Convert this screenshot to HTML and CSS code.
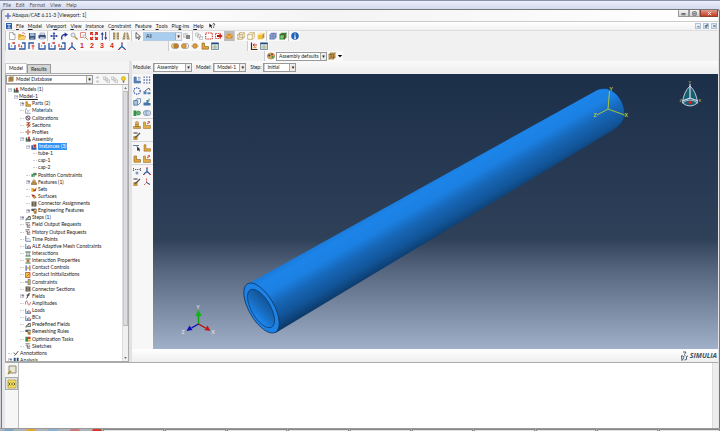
FILE: index.html
```html
<!DOCTYPE html>
<html lang="en">
<head>
<meta charset="utf-8">
<title>Abaqus/CAE 6.11-3 [Viewport: 1]</title>
<link rel="stylesheet" href="styles.css">
</head>
<body>
<svg class="defs" aria-hidden="true">
  <symbol id="new" viewBox="0 0 8 8"><path d="M1.500.5h3.500l2 2v5h-5.500z" fill="#fff" stroke="#8f9399" stroke-width=".7"/><path d="M5 .5v2h2" fill="none" stroke="#777" stroke-width=".6"/></symbol>
  <symbol id="open" viewBox="0 0 8 8"><path d="M.3 7V2h2.500l.7 1H6v4z" fill="#e5a52c"/><path d="M.3 7.500 2 4h6L6.500 7.500z" fill="#ffd56b" stroke="#b98520" stroke-width=".4"/><path d="M4 1.300q2-1.500 3 .7" stroke="#c33" fill="none" stroke-width=".6"/></symbol>
  <symbol id="save" viewBox="0 0 8 8"><path d="M1 1h6.500v6.500H1z" fill="#3d5680"/><path d="M2 1.200h4.500v2.800H2z" fill="#a8bbd2"/><path d="M2.500 5.500h3.500v2h-3.500z" fill="#8295b0"/></symbol>
  <symbol id="print" viewBox="0 0 8 8"><path d="M2 1h4.500v2H2z" fill="#dfe5ef" stroke="#56648a" stroke-width=".4"/><path d="M.5 3h7.200v3.500H.5z" fill="#3a4d7e"/><path d="M2 5h4.500v2.500H2z" fill="#b7c2db"/></symbol>
  <symbol id="pan" viewBox="0 0 8 8"><path d="M4 1v6M1 4h6" stroke="#2337a0"/><path d="M4 0 5.300 1.700H2.700zM4 8 2.700 6.300h2.600zM0 4l1.700-1.300v2.600zM8 4 6.300 5.300V2.700z" fill="#2337a0"/></symbol>
  <symbol id="rot" viewBox="0 0 8 8"><path d="M2 7.500Q.5 2.500 5.500 2.500" fill="none" stroke="#20309b" stroke-width="1.300"/><path d="M4.600.4 8 2.600 4.700 5z" fill="#20309b"/></symbol>
  <symbol id="lens" viewBox="0 0 8 8"><circle cx="3" cy="3" r="2" fill="#e5edf4" stroke="#9a9ca8" stroke-width=".8"/><path d="m4.500 4.500 3 3" stroke="#bd8425" stroke-width="1.300"/></symbol>
  <symbol id="boxlens" viewBox="0 0 8 8"><path d="M.5.500h5v5h-5z" fill="none" stroke="#d75e52" stroke-width=".7"/><circle cx="4.500" cy="4.500" r="1.500" fill="#f4eee8" stroke="#999" stroke-width=".6"/><path d="m5.600 5.600 2 2" stroke="#b87b26"/></symbol>
  <symbol id="fit" viewBox="0 0 8 8"><path d="M.7 3V.700H3M5 .700h2.300V3M7.300 5v2.300H5M3 7.300H.700V5M1 1l2 2M7 1 5 3M7 7 5 5M1 7l2-2" fill="none" stroke="#da2b20" stroke-width="1.200"/></symbol>
  <symbol id="updn" viewBox="0 0 8 8"><path d="M2.300 1v7M5.700 0v7" stroke="#273b91"/><path d="M.7 2.500 2.300 0l1.600 2.500zM4.100 5.500 5.700 8l1.600-2.500z" fill="#273b91"/></symbol>
  <symbol id="par" viewBox="0 0 8 8"><path d="M1 .5h2.300v7H1zM4.700.500H7v7H4.700z" fill="#a28a5d"/><path d="M1 3h6M1 5.500h6" stroke="#d8c9a0" stroke-width=".6"/></symbol>
  <symbol id="persp" viewBox="0 0 8 8"><path d="m2 .500h1.500L3.200 7.500H.300zM4.500.500H6l1.700 7H4.800z" fill="#a28a5d"/><path d="M1 3h6M1 5.500h6" stroke="#d8c9a0" stroke-width=".6"/></symbol>
  <symbol id="arrow" viewBox="0 0 8 8"><path d="M2 .500v6l1.500-1.300L4.500 7.500l1-.5-1-2.200h2z" fill="#fff" stroke="#222" stroke-width=".7"/></symbol>
  <symbol id="group" viewBox="0 0 8 8"><path d="M.5 1.500h4v4h-4z" fill="#ddd" stroke="#aaa" stroke-width=".5"/><path d="M3 3h4v4H3z" fill="#888"/></symbol>
  <symbol id="wire" viewBox="0 0 8 8"><path d="M.5 1h3v3h-3zM2.500 2.500h3v3h-3zM4.500 4.500h3v3h-3z" fill="#f6f6f6" stroke="#aaa" stroke-width=".6"/></symbol>
  <symbol id="dash" viewBox="0 0 8 8"><path d="M.7 1h6.600v6H.7z" fill="#fff" stroke="#d8291f" stroke-dasharray="1.500 .8"/></symbol>
  <symbol id="dash2" viewBox="0 0 8 8"><path d="M.5 1.500h5v5h-5z" fill="none" stroke="#d8291f" stroke-dasharray="1.500 .8" stroke-width=".8"/><path d="M2 4h3" stroke="#a11" stroke-width="2"/><path d="m4.500 1.500 3.300 2.500-3.300 2.500z" fill="#c5241b"/></symbol>
  <symbol id="loop" viewBox="0 0 8 8"><path d="M.7 3.500 3.500 1.500l4 1V6l-3 1-3.800-1z" fill="#d78d25"/><path d="m1 3.500 3.300 1 3-1.500M4.300 4.500V7" fill="none" stroke="#ffdca0" stroke-width=".6"/></symbol>
  <symbol id="cubew" viewBox="0 0 8 8"><path d="M.7 2.700h4.600v4.600H.7zM2.700.700h4.600v4.600H2.700zM.7 2.700l2-2m2.600 2 2-2m-2 6.600 2-2m-6.600 2 2-2" fill="#fffbe9" fill-opacity=".3" stroke="#b79a52" stroke-width=".7"/></symbol>
  <symbol id="cubeh" viewBox="0 0 8 8"><path d="M.7 2.700h4.600v4.600H.7zM.7 2.700l2-2h4.600l-2 2M7.300.700v4.600l-2 2" fill="#fffdf3" stroke="#b79a52" stroke-width=".7"/></symbol>
  <symbol id="cubes" viewBox="0 0 8 8"><path d="M.7 2.700h4.600v4.600H.7z" fill="#f2be35"/><path d="m.700 2.700 2-2h4.600l-2 2z" fill="#ffe58e"/><path d="M7.300.700v4.600l-2 2V2.700z" fill="#c58d1c"/></symbol>
  <symbol id="cubeb" viewBox="0 0 8 8"><path d="m.5 2.500 2-1.700h5v4.700l-2 1.900h-5z" fill="#667db5"/><path d="M.5 4h5M.5 5.700h5M5.500 2.500v5M2.800 2.500v5M.5 2.500h5l2-1.700M5.500 4l2-1.700" fill="none" stroke="#b3bddb" stroke-width=".4"/></symbol>
  <symbol id="cubeg" viewBox="0 0 8 8"><path d="m.5 2.500 2-1.700h5v4.700l-2 1.900h-5z" fill="#2b8b3c"/><path d="M1.500 3.500h3.500l-1 3h-2.500z" fill="#7fcc76"/><path d="M5.500 2.500v5M.5 2.500h5l2-1.700" fill="none" stroke="#7a3c1c" stroke-width=".6"/></symbol>
  <symbol id="info" viewBox="0 0 8 8"><circle cx="4" cy="4" r="3.800" fill="#2162b8"/><path d="M4 1.500v1M4 3.300v3M3 6.300h2" stroke="#fff" stroke-width="1.100"/></symbol>
  <symbol id="ax1" viewBox="0 0 8 8"><path d="M1 1v6h6V3" fill="none" stroke="#3057a5" stroke-width="1.300"/><path d="M4 1h3M6 0v2M3 4h1" stroke="#d9372b" stroke-width="1.200"/></symbol>
  <symbol id="ax2" viewBox="0 0 8 8"><path d="M1 7h6V1H4" fill="none" stroke="#3057a5" stroke-width="1.300"/><path d="M1 2v3M3.500 3.500v2" stroke="#d9372b" stroke-width="1.200"/></symbol>
  <symbol id="ax3" viewBox="0 0 8 8"><path d="M1 7V1h5" fill="none" stroke="#3057a5" stroke-width="1.300"/><path d="M3.500 4h3M5 2.500v5" stroke="#d9372b" stroke-width=".9"/></symbol>
  <symbol id="triad" viewBox="0 0 8 8"><path d="M4 1v3.500L1 7M4 4.500 7 7" fill="none" stroke="#2b559f" stroke-width="1.200"/><path d="M4 0v1.500M0 7.500h1.500M6.500 7.500H8" stroke="#d9372b"/></symbol>
  <symbol id="ovl" viewBox="0 0 8 8"><circle cx="2.900" cy="4" r="2.500" fill="#f2cc70" stroke="#777" stroke-width=".5"/><circle cx="5.200" cy="4" r="2.500" fill="#c77b25" stroke="#777" stroke-width=".5"/></symbol>
  <symbol id="ovl2" viewBox="0 0 8 8"><circle cx="5.200" cy="4" r="2.500" fill="#fff" stroke="#777" stroke-width=".6"/><circle cx="2.900" cy="4" r="2.500" fill="#e29a35" stroke="#777" stroke-width=".5"/></symbol>
  <symbol id="dot" viewBox="0 0 8 8"><path d="M0 4h8" stroke="#999" stroke-width=".6"/><circle cx="4" cy="4" r="2.400" fill="#e09a32" stroke="#8a6a30" stroke-width=".5"/></symbol>
  <symbol id="parts" viewBox="0 0 8 8"><path d="M1 1h2.500v3.500H7.500v2.700H1z" fill="#e2a437" stroke="#8a6019" stroke-width=".6"/></symbol>
  <symbol id="table" viewBox="0 0 8 8"><path d="M.4 1h7.200v6.400H.4z" fill="#eef2f2" stroke="#38607d" stroke-width=".7"/><path d="M.4 1.500h7.200" stroke="#244b84" stroke-width="1.600"/><path d="M1 4.200h6M1 5.800h6M4 3v4" stroke="#8c9f6a" stroke-width=".6"/></symbol>
  <symbol id="cut" viewBox="0 0 8 8"><path d="M1.500.500v7h6" fill="none" stroke="#3b2b20" stroke-width="1.200"/><path d="M3 3h4M4.500 1.500 3 3l1.500 1.500" stroke="#cf3325" fill="none"/><path d="M3.500 5.500h3" stroke="#e4a233" stroke-width="1.500"/></symbol>
  <symbol id="palette" viewBox="0 0 8 8"><ellipse cx="4" cy="4" rx="3.700" ry="3" fill="#dab15c" stroke="#885f20" stroke-width=".5"/><circle cx="2.300" cy="3.500" r="1.100" fill="#253b8e"/><circle cx="5" cy="2.500" r="1" fill="#c9271d"/><circle cx="5.500" cy="5" r="1.100" fill="#28944a"/></symbol>
  <symbol id="cubebr" viewBox="0 0 8 8"><path d="m.500 2.500 2-2h5v5l-2 2h-5z" fill="#bd9553"/><path d="M.5 2.500h5l2-2M5.500 2.500v5M3 .700v4.500h4.300M.700 7 3 5.200" fill="none" stroke="#6e5325" stroke-width=".5"/></symbol>
  <symbol id="asm" viewBox="0 0 8 8"><path d="M1 2h2v5.500H1z" fill="#3f6b4e"/><path d="M3 4h4.500v3.500H3z" fill="#555"/><path d="M4 1h2.500v3H4z" fill="#c93b30"/></symbol>
  <symbol id="inst" viewBox="0 0 8 8"><path d="M.5 1.500h2.300v3h4.500v3H.5z" fill="#34599a"/><path d="M3 .5h4v4H3.500z" fill="#c33026"/></symbol>
  <symbol id="sheet" viewBox="0 0 8 8"><path d="M.5 1h2M.5 7V2M7.500 7h-7" stroke="#4f5f7f" stroke-width=".8"/><path d="m2 2 2.500 2L7 2M3 6l1.500-2" stroke="#7a8a9f" fill="none" stroke-width=".8"/></symbol>
  <symbol id="calib" viewBox="0 0 8 8"><circle cx="4" cy="4" r="2.800" fill="#fff" stroke="#27386d" stroke-width="1.200"/><path d="M2 2 6 6" stroke="#c0392b" stroke-width="1.400"/></symbol>
  <symbol id="sect" viewBox="0 0 8 8"><path d="M2 1h4L3 4h3.500L3 7.500" fill="none" stroke="#a8452b" stroke-width="1.400"/><path d="M1 4h2M5 6h2" stroke="#e8a23a" stroke-width="1.200"/></symbol>
  <symbol id="prof" viewBox="0 0 8 8"><path d="M4 .5v7M.5 4h7" stroke="#a34f36" stroke-width="1.600"/><circle cx="4" cy="4" r="1.600" fill="#dc8f62"/></symbol>
  <symbol id="green" viewBox="0 0 8 8"><path d="M.5 2.500h3v4h-3z" fill="#3ba05a"/><path d="M3.500 1.500h3.500v2.500H3.500zM4.500 4v3" fill="#57795e" stroke="#2d7348" stroke-width=".7"/></symbol>
  <symbol id="feat" viewBox="0 0 8 8"><path d="M2.500 1.500h3l.5 3.500h1.500v2.500h-7V5H2z" fill="#b68b3f" stroke="#634b22" stroke-width=".5"/><circle cx="4" cy="1.700" r="1.400" fill="#e2b861"/></symbol>
  <symbol id="sets" viewBox="0 0 8 8"><path d="M.5 2 3 3v4.500H.5z" fill="#e5b432"/><path d="m3 3 2 1.500 2.500-3-1 5-3.500 1z" fill="#cc382b"/></symbol>
  <symbol id="surf" viewBox="0 0 8 8"><path d="m.5 1.500 4 1 3 3-3 2L2 5z" fill="#a83228"/><path d="m3 4 4 .5-2 3z" fill="#e9b648"/></symbol>
  <symbol id="dark" viewBox="0 0 8 8"><path d="M.7.700h6.600v6.600H.7z" fill="#59574f"/><path d="M2 2.500h4M2 5.500h4M4 2v4" stroke="#d0b779" stroke-width=".8"/></symbol>
  <symbol id="eng" viewBox="0 0 8 8"><path d="M.5 1h4v3h-4z" fill="#555"/><path d="M3 3.500h4.500v4H4z" fill="#ad8338"/><path d="M4 1.500h3v2" fill="none" stroke="#333"/></symbol>
  <symbol id="steps" viewBox="0 0 8 8"><path d="M.5 6.500h2V4h2V2H7v4.500" fill="none" stroke="#555" stroke-width="1.300"/><path d="M3 6h4" stroke="#4a9c5a" stroke-width="1.500"/></symbol>
  <symbol id="req" viewBox="0 0 8 8"><path d="M.5 1h6M1 3h3M3 5h3M3 7h4M3 3v4" stroke="#555b66" stroke-width="1" fill="none"/><path d="M4.500 2.500 7 4 5 6" stroke="#c0493f" fill="none" stroke-width=".8"/></symbol>
  <symbol id="graph" viewBox="0 0 8 8"><path d="M1 0v7h7" fill="none" stroke="#3b5793"/><path d="m1.500 3 2 1 1.500-1 2 2" fill="none" stroke="#7d8fb5" stroke-width=".8"/></symbol>
  <symbol id="bars" viewBox="0 0 8 8"><path d="M1 1v6.500h7" fill="none" stroke="#3b5793"/><path d="M2.500 4h1.500v3H2.500zM4.500 2.500H6V7H4.500z" fill="#6f86a8"/><path d="M6.500 4.500h1.300V7H6.500z" fill="#b8463a"/></symbol>
  <symbol id="inter" viewBox="0 0 8 8"><path d="M.5 1.300h7M.5 6.700h7" stroke="#2f7b52" stroke-width="1.300"/><path d="M2.500 1.500v5M5.500 1.500v5" stroke="#333" stroke-width=".8"/></symbol>
  <symbol id="interp" viewBox="0 0 8 8"><path d="M.5 1.300h7M.5 6.700h7" stroke="#2f7b52" stroke-width="1.300"/><path d="M2 2h4v4H2z" fill="#c0753d"/></symbol>
  <symbol id="ctrl" viewBox="0 0 8 8"><path d="M1.500.500v7" stroke="#3452a0" stroke-width="1.500"/><path d="M6.500.500v7" stroke="#7a3f88" stroke-width="1.300"/><path d="M2.500 2.500h3v3h-3z" fill="#e5c247"/></symbol>
  <symbol id="cinit" viewBox="0 0 8 8"><path d="M.7.700h6v6.600h-6z" fill="#f2cf4b" stroke="#b9432f"/><path d="m2 6 4-4" stroke="#c4372a"/></symbol>
  <symbol id="cons" viewBox="0 0 8 8"><path d="M0 4h3.500" stroke="#3353a0" stroke-width="1.300"/><path d="M4 .7h3v6.600H4z" fill="#e1c04a" stroke="#3b4d77" stroke-width=".7"/></symbol>
  <symbol id="fx" viewBox="0 0 8 8"><path d="M6.500 1Q4.500 0 4 3T2 7.300M2 2.800h4" fill="none" stroke="#222" stroke-width="1.200"/></symbol>
  <symbol id="amp" viewBox="0 0 8 8"><path d="M.7 6V3q1.300-4 2.600 0t2 4T7.500 3" fill="none" stroke="#bd4247" stroke-width="1"/></symbol>
  <symbol id="opt" viewBox="0 0 8 8"><path d="M.5 1h3.500v6.500H.5z" fill="#2f9254"/><path d="M4 1h3.500v3H4z" fill="#d64231"/><path d="M4 4.500h3.500v3H4z" fill="#e7ba39"/></symbol>
  <symbol id="anno" viewBox="0 0 8 8"><path d="M1 3.500 3.500 6 7 1.500M3.500 6 2 7.500" fill="none" stroke="#222" stroke-width="1"/></symbol>
  <symbol id="anal" viewBox="0 0 8 8"><path d="M1 1h2.500v6H1zM5 1h2.500v6H5z" fill="#2b4d7c"/></symbol>
  <symbol id="bulb" viewBox="0 0 8 8"><circle cx="4" cy="3" r="2.300" fill="#f2d51f" stroke="#a48c12" stroke-width=".6"/><path d="M3 6h2M3.300 7.200h1.400" stroke="#555"/></symbol>
  <symbol id="ud" viewBox="0 0 8 8"><path d="m4 0 2 2.500H2zM4 8 2 5.500h4z" fill="#bbb"/></symbol>
  <symbol id="grid" viewBox="0 0 8 8"><path d="M.5 1.200h7M.5 4h7M.5 6.800h7" stroke="#4961a8" stroke-width="1.300" stroke-dasharray="1.300 1.400"/></symbol>
  <symbol id="ring" viewBox="0 0 8 8"><circle cx="4" cy="4" r="3.200" fill="none" stroke="#3153a0" stroke-width="1.200" stroke-dasharray="1.300 1"/></symbol>
  <symbol id="bl1" viewBox="0 0 8 8"><path d="M1 1v6h6.500V5H3.300V1z" fill="#5d87bd" stroke="#31588d" stroke-width=".5"/><path d="M5 1.500h2.500M5 3h2.500" stroke="#7a94ba" stroke-width=".8"/></symbol>
  <symbol id="bl2" viewBox="0 0 8 8"><path d="M.5 7.300h3v-3h-3zM4.500 7.300h3v-2h-3z" fill="#5680b4"/><path d="M2 4 6 1l1 2.500" fill="none" stroke="#49688f"/></symbol>
  <symbol id="bl3" viewBox="0 0 8 8"><path d="M.7 2.500h4v4.700h-4z" fill="#a6c3df" stroke="#3c6798" stroke-width=".7"/><path d="M2.500 2.500 4 .7h3.500v4L5 7" fill="none" stroke="#3c6798" stroke-width=".7"/></symbol>
  <symbol id="bl4" viewBox="0 0 8 8"><path d="M.5 7.500V4.500h3V2h2v3h2v2.500z" fill="#4472ac"/><path d="M6 .500v3" stroke="#45a068"/></symbol>
  <symbol id="gr" viewBox="0 0 8 8"><path d="M.5 1.500h3v5.500h-3z" fill="#2e9445"/><circle cx="5.500" cy="4" r="2" fill="#67b36f" stroke="#2e7441" stroke-width=".6"/></symbol>
  <symbol id="mrg" viewBox="0 0 8 8"><circle cx="2.900" cy="4" r="2.500" fill="#c9d8ea" stroke="#54749c" stroke-width=".6"/><circle cx="5.200" cy="4" r="2.500" fill="#c9d8ea" fill-opacity=".6" stroke="#54749c" stroke-width=".6"/></symbol>
  <symbol id="stamp" viewBox="0 0 8 8"><path d="M.5 5.500h7v2h-7zM2.500 3h3v2.500h-3z" fill="#daa640" stroke="#8e6520" stroke-width=".5"/><circle cx="4" cy="2" r="1.600" fill="#e2b054" stroke="#8e6520" stroke-width=".4"/></symbol>
  <symbol id="lred" viewBox="0 0 8 8"><path d="M.5 1h2v3.500h5v3h-7z" fill="#e0ab48" stroke="#8e6520" stroke-width=".5"/><path d="m4 3 3-2M4.500.800h2.500" stroke="#ce4736" stroke-width="1"/></symbol>
  <symbol id="lor" viewBox="0 0 8 8"><path d="M1 .7h2v4h4.700v2.500H1z" fill="#e6a53a" stroke="#8e6520" stroke-width=".5"/></symbol>
  <symbol id="pencil" viewBox="0 0 8 8"><path d="M.7 4.500h3.500v3H.7z" fill="#d9a744" stroke="#8e6520" stroke-width=".5"/><path d="m2 6 5-5" stroke="#5b5346" stroke-width="1.200"/><path d="M.5 1h4" stroke="#333"/></symbol>
  <symbol id="pick" viewBox="0 0 8 8"><path d="M0 1.500h6M3 1.500l3 3" stroke="#557690" stroke-width=".9"/><path d="m4 3 .3 4 1-1 1 1.500.7-.5-1-1.400H7.500z" fill="#222"/></symbol>
  <symbol id="xyz" viewBox="0 0 8 8"><path d="M.8 1 0 2.500l.8 1.500M7.200 1 8 2.500 7.200 4M2 2.500h1.200M3.900 2.500h1M5.600 2.500h1" fill="none" stroke="#333" stroke-width=".8"/><path d="M4 4.500v3M2.500 6h3" stroke="#3d70b4" stroke-width=".9"/></symbol>
  <symbol id="tri2" viewBox="0 0 8 8"><path d="M3.500.500v4L1 7M3.500 4.500 7 6.500" fill="none" stroke="#c9493d" stroke-width=".9" stroke-dasharray="1.500 .5"/><path d="M3.500 4.500 7 6.500" stroke="#2b559f"/></symbol>
</svg>

<div class="host"><span>File</span><span>Edit</span><span>Format</span><span>View</span><span>Help</span></div>
<div class="window">
  <header class="titlebar">
    <svg class="ic"><use href="#pan"/></svg><h1>Abaqus/CAE 6.11-3 [Viewport: 1]</h1>
    <div class="caption"><button class="cap" aria-label="Minimize"><svg viewBox="0 0 6 6"><path d="M1 3h4v1.500H1z"/></svg></button><button class="cap" aria-label="Restore"><svg viewBox="0 0 6 6"><path d="M1 1h4v4H1zM2 3h2"/></svg></button><button class="cap close" aria-label="Close"><svg viewBox="0 0 6 6"><path d="m1 1 4 4M5 1 1 5"/></svg></button></div>
  </header>
  <nav class="menubar">
    <svg class="ic badge" viewBox="0 0 8 8"><path d="M1.500 2h5M4 2v4M2 6.500h4" stroke="#fff" fill="none"/></svg>
    <button><u>F</u>ile</button><button><u>M</u>odel</button><button>Vie<u>w</u>port</button><button><u>V</u>iew</button><button><u>I</u>nstance</button><button>C<u>o</u>nstraint</button><button>Fea<u>t</u>ure</button><button><u>T</u>ools</button><button>Plu<u>g</u>-ins</button><button><u>H</u>elp</button>
    <button aria-label="Context help"><svg viewBox="0 0 8 8"><path d="M.500.500v5.500l1.500-1.300 1.300 2.300.8-.4-1.200-2.200h1.800z" fill="#111"/><path d="M5 2q.2-1.300 1.300-1.300T7.500 2Q7.500 3 6.300 3.700v1M6.300 5.500v1" stroke="#111" fill="none"/></svg></button>
    <div class="mdi"><button aria-label="Minimize viewport"><svg viewBox="0 0 6 6"><path d="M1.500 4h3"/></svg></button><button aria-label="Restore viewport"><svg viewBox="0 0 6 6"><path d="M1.500 2.500h2v2h-2zM3 1.500h1.500V3"/></svg></button><button aria-label="Close viewport"><svg viewBox="0 0 6 6"><path d="m1.500 1.500 3 3M4.500 1.500l-3 3"/></svg></button></div>
  </nav>
  <div class="bars">
    <div class="toolrow">
      <div class="tools">
        <button aria-label="New"><svg><use href="#new"/></svg></button><button aria-label="Open"><svg><use href="#open"/></svg></button><button aria-label="Save"><svg><use href="#save"/></svg></button><button aria-label="Print"><svg><use href="#print"/></svg></button>
      </div><div class="tools">
        <button aria-label="Pan"><svg><use href="#pan"/></svg></button><button aria-label="Rotate"><svg><use href="#rot"/></svg></button><button aria-label="Magnify"><svg><use href="#lens"/></svg></button><button aria-label="Box zoom"><svg><use href="#boxlens"/></svg></button><button aria-label="Fit"><svg><use href="#fit"/></svg></button><button aria-label="Cycle"><svg><use href="#updn"/></svg></button>
      </div><div class="tools">
        <button aria-label="Parallel"><svg><use href="#par"/></svg></button><button aria-label="Perspective"><svg><use href="#persp"/></svg></button>
      </div><div class="tools">
        <button aria-label="Select"><svg><use href="#arrow"/></svg></button>
        <span class="drop blue"><select aria-label="Selection filter"><option>All</option></select></span>
        <button aria-label="Group"><svg><use href="#group"/></svg></button>
      </div><div class="tools">
        <button aria-label="Overlap"><svg><use href="#wire"/></svg></button><button aria-label="Drag shape"><svg><use href="#dash"/></svg></button><button aria-label="Inside"><svg><use href="#dash2"/></svg></button><button class="pressed" aria-label="Exterior"><svg><use href="#loop"/></svg></button>
      </div><div class="tools">
        <button aria-label="Wireframe"><svg><use href="#cubew"/></svg></button><button aria-label="Hidden"><svg><use href="#cubeh"/></svg></button><button aria-label="Shaded"><svg><use href="#cubes"/></svg></button>
      </div><div class="tools">
        <button aria-label="Mesh"><svg><use href="#cubeb"/></svg></button><button aria-label="Geometry"><svg><use href="#cubeg"/></svg></button>
      </div><div class="tools"><button aria-label="Query"><svg><use href="#info"/></svg></button></div>
    </div>
    <div class="toolrow">
      <div class="tools views">
        <button aria-label="Front"><svg><use href="#ax1"/></svg></button><button aria-label="Back"><svg><use href="#ax2"/></svg></button><button aria-label="Top"><svg><use href="#ax3"/></svg></button><button aria-label="Bottom"><svg><use href="#ax1"/></svg></button><button aria-label="Left"><svg><use href="#ax1"/></svg></button><button aria-label="Right"><svg><use href="#ax2"/></svg></button><button aria-label="Iso"><svg><use href="#triad"/></svg></button><button class="num">1</button><button class="num">2</button><button class="num">3</button><button class="num">4</button><button aria-label="Views"><svg><use href="#triad"/></svg></button>
      </div><div class="tools disp">
        <button aria-label="Replace"><svg><use href="#ovl"/></svg></button><button aria-label="Remove"><svg><use href="#ovl2"/></svg></button><button aria-label="Either"><svg><use href="#dot"/></svg></button><button aria-label="Parts"><svg><use href="#parts"/></svg></button><button aria-label="Display manager"><svg><use href="#table"/></svg></button>
      </div><div class="tools cuts">
        <button aria-label="View cut"><svg><use href="#cut"/></svg></button><button aria-label="Cut manager"><svg><use href="#table"/></svg></button>
      </div>
    </div>
    <div class="toolrow">
      <div class="tools colors">
        <button aria-label="Color code"><svg><use href="#palette"/></svg></button><span class="drop defaults"><select aria-label="Color mapping"><option>Assembly defaults</option></select></span><button aria-label="Translucency"><svg><use href="#cubebr"/></svg></button><button class="more" aria-label="More"><svg viewBox="0 0 8 8"><path d="M1 2.500h6L4 5.500z"/></svg></button>
      </div>
    </div>
  </div>

  <div class="main">
    <aside class="side">
      <div class="tabs"><button class="tab on">Model</button><button class="tab">Results</button></div>
      <div class="panel">
        <div class="dbrow">
          <span class="drop db"><svg class="ic"><use href="#cubebr"/></svg><select aria-label="Database"><option>Model Database</option></select></span>
          <button aria-label="Sort"><svg><use href="#ud"/></svg></button><button aria-label="Up"><svg><use href="#wire"/></svg></button><button aria-label="Filter"><svg><use href="#wire"/></svg></button><button aria-label="Tip"><svg><use href="#bulb"/></svg></button>
        </div>
        <div class="treebox">
          <ul class="tree">
            <li class="l0"><i class="ex">−</i><svg><use href="#asm"/></svg>Models (1)</li>
            <li class="l1"><i class="ex">−</i><u>Model-1</u></li>
            <li class="l2"><i class="ex">+</i><svg><use href="#parts"/></svg>Parts (2)</li>
            <li class="l2"><i></i><svg><use href="#sheet"/></svg>Materials</li>
            <li class="l2"><i></i><svg><use href="#calib"/></svg>Calibrations</li>
            <li class="l2"><i></i><svg><use href="#sect"/></svg>Sections</li>
            <li class="l2"><i></i><svg><use href="#prof"/></svg>Profiles</li>
            <li class="l2"><i class="ex">−</i><svg><use href="#asm"/></svg>Assembly</li>
            <li class="l3"><i class="ex">−</i><svg><use href="#inst"/></svg><b>Instances (3)</b></li>
            <li class="l4"><i></i>tube-1</li>
            <li class="l4"><i></i>cap-1</li>
            <li class="l4"><i></i>cap-2</li>
            <li class="l3"><i></i><svg><use href="#green"/></svg>Position Constraints</li>
            <li class="l3"><i class="ex">+</i><svg><use href="#feat"/></svg>Features (1)</li>
            <li class="l3"><i></i><svg><use href="#sets"/></svg>Sets</li>
            <li class="l3"><i></i><svg><use href="#surf"/></svg>Surfaces</li>
            <li class="l3"><i></i><svg><use href="#dark"/></svg>Connector Assignments</li>
            <li class="l3"><i class="ex">+</i><svg><use href="#eng"/></svg>Engineering Features</li>
            <li class="l2"><i class="ex">+</i><svg><use href="#steps"/></svg>Steps (1)</li>
            <li class="l2"><i></i><svg><use href="#req"/></svg>Field Output Requests</li>
            <li class="l2"><i></i><svg><use href="#req"/></svg>History Output Requests</li>
            <li class="l2"><i></i><svg><use href="#graph"/></svg>Time Points</li>
            <li class="l2"><i></i><svg><use href="#bars"/></svg>ALE Adaptive Mesh Constraints</li>
            <li class="l2"><i></i><svg><use href="#inter"/></svg>Interactions</li>
            <li class="l2"><i></i><svg><use href="#interp"/></svg>Interaction Properties</li>
            <li class="l2"><i></i><svg><use href="#ctrl"/></svg>Contact Controls</li>
            <li class="l2"><i></i><svg><use href="#cinit"/></svg>Contact Initializations</li>
            <li class="l2"><i></i><svg><use href="#cons"/></svg>Constraints</li>
            <li class="l2"><i></i><svg><use href="#dark"/></svg>Connector Sections</li>
            <li class="l2"><i class="ex">+</i><svg><use href="#fx"/></svg>Fields</li>
            <li class="l2"><i></i><svg><use href="#amp"/></svg>Amplitudes</li>
            <li class="l2"><i></i><svg><use href="#bars"/></svg>Loads</li>
            <li class="l2"><i></i><svg><use href="#bars"/></svg>BCs</li>
            <li class="l2"><i></i><svg><use href="#steps"/></svg>Predefined Fields</li>
            <li class="l2"><i></i><svg><use href="#eng"/></svg>Remeshing Rules</li>
            <li class="l2"><i></i><svg><use href="#opt"/></svg>Optimization Tasks</li>
            <li class="l2"><i></i><svg><use href="#req"/></svg>Sketches</li>
            <li class="l0"><i></i><svg><use href="#anno"/></svg>Annotations</li>
            <li class="l0"><i class="ex">+</i><svg><use href="#anal"/></svg>Analysis</li>
          </ul>
          <div class="scroll"><svg viewBox="0 0 6 6"><path d="m3 2 1.500 2h-3z"/></svg><div class="thumb"></div><svg viewBox="0 0 6 6"><path d="M3 4 1.500 2h3z"/></svg></div>
        </div>
      </div>
    </aside>
    <div class="split"></div>
    <section class="work">
      <div class="context">
        <label for="module">Module:</label><span class="drop w1"><select id="module"><option>Assembly</option></select></span>
        <label for="model">Model:</label><span class="drop w2"><select id="model"><option>Model-1</option></select></span>
        <label for="step">Step:</label><span class="drop w2"><select id="step"><option>Initial</option></select></span>
      </div>
      <div class="stage">
        <div class="palette">
          <div class="set">
            <button aria-label="Instance part"><svg><use href="#bl1"/></svg></button><button aria-label="Linear pattern"><svg><use href="#grid"/></svg></button>
            <button aria-label="Radial pattern"><svg><use href="#ring"/></svg></button><button aria-label="Translate"><svg><use href="#bl2"/></svg></button>
            <button aria-label="Rotate instance"><svg><use href="#bl3"/></svg></button><button aria-label="Translate to"><svg><use href="#bl4"/></svg></button>
            <button aria-label="Constraint"><svg><use href="#gr"/></svg></button><button aria-label="Merge"><svg><use href="#mrg"/></svg></button>
          </div>
          <div class="set">
            <button aria-label="Create set"><svg><use href="#stamp"/></svg></button><button aria-label="Edit feature"><svg><use href="#lred"/></svg></button>
            <button aria-label="Regenerate"><svg><use href="#pencil"/></svg></button>
          </div>
          <div class="set">
            <button aria-label="Partition edge"><svg><use href="#pick"/></svg></button><button aria-label="Partition face"><svg><use href="#lor"/></svg></button>
            <button aria-label="Partition cell"><svg><use href="#parts"/></svg></button><button aria-label="Virtual topology"><svg><use href="#lred"/></svg></button>
          </div>
          <div class="set">
            <button aria-label="Datum point"><svg><use href="#xyz"/></svg></button><button aria-label="Datum system"><svg><use href="#triad"/></svg></button>
            <button aria-label="Datum plane"><svg><use href="#pencil"/></svg></button><button aria-label="Datum axis"><svg><use href="#tri2"/></svg></button>
          </div>
        </div>
        <svg class="view" viewBox="153 74 566 275" preserveAspectRatio="xMidYMid slice" role="img" aria-label="Tube assembly">
          <defs>
            <linearGradient id="body" gradientUnits="userSpaceOnUse" x1="418" y1="187" x2="445" y2="234"><stop offset="0" stop-color="#1b7ad8"/><stop offset=".12" stop-color="#1c84e9"/><stop offset=".34" stop-color="#1b80e2"/><stop offset=".56" stop-color="#1766b6"/><stop offset=".8" stop-color="#125599"/><stop offset="1" stop-color="#0c3c6d"/></linearGradient>
            <linearGradient id="bore" x1="0" y1="0" x2=".6" y2="1"><stop offset="0" stop-color="#0f4d8d"/><stop offset=".5" stop-color="#1765b4"/><stop offset="1" stop-color="#1c86ed"/></linearGradient>
          </defs>
          <path d="M250 283 597 90.500Q604 87 611 90C620 95 626 106 625 116Q624 123 617 128L276 333Z" fill="url(#body)"/>
          <path d="M601 89Q607 87 613 91C621 96 626 107 625 116Q624 123 617 128" fill="none" stroke="#0c335e" stroke-width=".6"/>
          <ellipse cx="262" cy="308" rx="28" ry="12.500" transform="rotate(60 262 308)" fill="#1c82e6" stroke="#0b2f57" stroke-width=".7"/>
          <ellipse cx="261.500" cy="308.500" rx="21.500" ry="9.500" transform="rotate(60 261.500 308.500)" fill="url(#bore)" stroke="#0b2f57" stroke-width=".6"/>
          <g class="datum"><path d="m608.500 109 1.500-18M608.500 109l16.500 6M608.500 109l-11 6"/><text x="610" y="91">Y</text><text x="625" y="117">X</text><text x="594" y="117">Z</text></g>
          <g fill="none" stroke-width="1.400"><path d="M199 324v-9" stroke="#0aa50a"/><path d="m199 324-7 4" stroke="#0b0bb0"/><path d="m199 324 7 4" stroke="#b51010"/></g>
          <path d="M199 310l3.200 6h-6.400z" fill="#11b511"/><path d="m187 331 3-5.500 3 4.500z" fill="#0c0cb8"/><path d="m211 331-3-5.500-3 4.500z" fill="#c81414"/>
          <g class="axis"><text x="197" y="309">Y</text><text x="182" y="334">Z</text><text x="212" y="334">X</text></g>
          <path d="M690.500 86Q684 92 683 103q7.500 6 15 0-1-11-7.500-17z" fill="#15606d" stroke="#c4c4e0" stroke-width="1"/>
          <path d="M683 103q7.500-6 15 0" fill="none" stroke="#c4c4e0" stroke-width=".9"/>
          <path d="M690.500 84v14l-8 3M690.500 98l8 3" fill="none" stroke="#dadaf0" stroke-width="1.200"/>
          <circle cx="690.500" cy="102.500" r="1.500" fill="#f01414"/>
          <g class="gold"><text x="689" y="84">Y</text><text x="680" y="102">Z</text><text x="699" y="102">X</text></g>
        </svg>
      </div>
      <footer class="brand"><svg viewBox="0 0 9 10"><path d="M3 1h3L4.500 3.500Q6 4 4 5.500M1 5h2q2 1-1 4.500L1.500 5M8 5Q5.500 5 6.500 7t-2 2" fill="none" stroke="#3e5566" stroke-width=".9"/></svg><span>SIMULIA</span></footer>
    </section>
  </div>
  <div class="message">
    <div class="modes"><button aria-label="Message area"><svg viewBox="0 0 10 10"><path d="M2 1h7v7H2z" fill="#e9e6d2" stroke="#8c8b7b"/><path d="m1 9 3-3" stroke="#a18424" stroke-width="1.500"/></svg></button><button class="cli" aria-label="Command line"><svg viewBox="0 0 10 10"><path d="M1 1h8v8H1z" fill="#f2dc5c" stroke="#a5913a" stroke-width=".6"/><path d="m1.500 3.500 1.500 1.500-1.500 1.500M4 3.500 5.500 5 4 6.500M6.500 3.500 8 5 6.500 6.500" fill="none" stroke="#333" stroke-width=".8"/></svg></button></div>
    <textarea aria-label="Messages"></textarea>
    <div class="gutter"></div>
  </div>
</div>
<div class="taskbar"><i class="a"></i><i class="b"></i><i class="c"></i><i class="d"></i><i class="e"></i><i class="task"></i><i class="task"></i><i class="task"></i><i class="task"></i><i class="task"></i><i class="task"></i><i class="task"></i><i class="task"></i><i class="task"></i><i class="task"></i></div>
</body>
</html>
```
FILE: styles.css
```css
* { box-sizing: border-box; }
html, body { height: 100%; }
body {
  margin: 0;
  display: flex;
  flex-direction: column;
  overflow: hidden;
  font: 5px/7px Lato, "Open Sans", sans-serif;
  color: #222;
  background: #cfd2d8;
}
.defs { position: absolute; width: 0; height: 0; }
button {
  display: inline-flex;
  align-items: center;
  justify-content: center;
  margin: 0;
  padding: 0;
  border: 0;
  background: none;
  font: inherit;
  color: inherit;
}
.ic, button svg { flex: none; width: 8px; height: 8px; }
h1 { margin: 0; font: inherit; }

.host {
  display: flex;
  align-items: center;
  gap: 5px;
  flex: none;
  height: 9px;
  padding-left: 3px;
  border-top: 1px solid #8a93ae;
  background: linear-gradient(#eceffa, #d2d8ee);
  color: #555;
}

.window {
  flex: 1;
  min-height: 0;
  display: flex;
  flex-direction: column;
  margin-left: 1px;
  padding: 0 1px 0 3px;
  border: 1px solid #777;
  border-width: 1px 1px 0;
  border-radius: 3px 3px 0 0;
  background: #e6e6e8;
}
.titlebar {
  display: flex;
  align-items: center;
  gap: 1px;
  flex: none;
  height: 11px;
  background: linear-gradient(90deg, #f2f2f3, #fff 20%, #f4f4f4 45%, #fff);
}
.titlebar .ic { width: 6px; }
.caption { display: flex; align-self: flex-start; margin-left: auto; }
.cap { width: 11px; height: 7px; border: 1px solid #999; border-top: 0; background: linear-gradient(#f4f4f4, #cfcfcf); }
.cap svg, .mdi svg { width: 5px; height: 5px; fill: none; stroke: #555; stroke-width: 1; }
.close { width: 18px; background: linear-gradient(#e09a8b, #c63d25); border-color: #843; }
.close svg { stroke: #fff; }

.menubar {
  display: flex;
  align-items: center;
  gap: 4px;
  flex: none;
  height: 9px;
  padding-left: 1px;
  border-top: 1px solid #ccc;
  background: linear-gradient(#fff, #f1f1f1);
}
.badge { background: #2d5fa8; width: 6px; height: 6px; }
.menubar svg { height: 6px; }
.mdi { display: flex; gap: 2px; margin-left: auto; padding-right: 1px; }
.mdi button { width: 6px; height: 6px; border: 1px solid #b2c4d8; background: #e3edf7; }
.mdi svg { stroke: #456; }

.bars { flex: none; background: #f1f1f1; border-top: 1px solid #ddd; }
.toolrow { display: flex; height: 10px; }
.tools {
  display: flex;
  align-items: center;
  padding-left: 1px;
  border-left: 1px solid #ccc;
  background: #f9f9f9;
}
.tools button { width: 10px; height: 10px; }
.tools .pressed { background: #bcbcbc; }
.tools .num { color: #c8281e; font: bold 7px/10px "Liberation Sans", sans-serif; }
.tools .more { width: 6px; }
.tools .more svg { width: 6px; height: 6px; }
.disp { margin-left: 41px; }
.cuts { margin-left: 27px; }
.colors { margin-left: 259px; }

.drop {
  position: relative;
  display: flex;
  align-items: center;
  height: 9px;
  border: 1px solid #999;
  background: #fff;
}
.drop::after {
  content: "▾";
  position: absolute;
  right: 0;
  top: 0;
  width: 5px;
  height: 7px;
  border-left: 1px solid #aaa;
  background: #ececec;
  color: #111;
  font: 5px/7px "DejaVu Sans", sans-serif;
  text-align: center;
}
.drop select {
  appearance: none;
  flex: 1;
  min-width: 0;
  width: 100%;
  height: 7px;
  margin: 0;
  padding: 0 5px 0 2px;
  border: 0;
  background: none;
  font: inherit;
  color: inherit;
}
.blue { width: 39px; background: #a9cdef; border-color: #b7cbe0; }
.defaults { width: 51px; }

.main { flex: 1; min-height: 0; display: flex; background: #f2f2f2; }
.side { display: flex; flex-direction: column; flex: 0 0 18%; max-width: 124px; padding-top: 2px; background: #f4f4f5; }
.tabs { display: flex; align-items: flex-end; height: 10px; flex: none; }
.tab { height: 9px; padding: 0 3px; border: 1px solid #999; border-bottom: 0; border-radius: 1px 1px 0 0; background: #d6d6d8; }
.tab.on { height: 10px; border-color: #ccc; background: #fff; }
.panel { flex: 1; min-height: 0; display: flex; flex-direction: column; border: 1px solid #aaa; background: #fff; }
.dbrow { display: flex; align-items: center; flex: none; height: 11px; background: #f6f6f6; border-bottom: 1px solid #bbb; }
.dbrow button { flex: 1; }
.dbrow button svg { width: 7px; height: 7px; }
.db { width: 87px; flex: none; }
.db .ic { width: 6px; height: 6px; margin-left: 1px; }
.treebox { flex: 1; min-height: 0; display: flex; overflow: hidden; }
.tree {
  flex: 1;
  display: grid;
  grid-auto-rows: 1fr;
  margin: 0 0 -3px;
  padding: 1px 0 0;
  list-style: none;
}
.tree li { display: flex; align-items: center; gap: 1px; min-height: 0; white-space: nowrap; }
.tree svg { width: 6px; height: 6px; flex: none; }
.tree i { width: 4px; height: 1px; border-top: 1px dotted #ccc; flex: none; }
.tree .ex { height: 4px; border: 1px solid #ccd; background: #eef; color: #446; font: normal 4px/2px "DejaVu Sans", sans-serif; text-align: center; }
.tree b { padding: 0 1px; background: #2f93f5; color: #fff; font-weight: normal; }
.l0 { padding-left: 2px; }
.l1 { padding-left: 8px; }
.l2 { padding-left: 14px; }
.l3 { padding-left: 20px; }
.l4 { padding-left: 27px; }
.scroll { width: 6px; flex: none; display: flex; flex-direction: column; background: #f0f0f0; border-left: 1px solid #ddd; }
.scroll svg { width: 5px; height: 6px; flex: none; fill: #333; }
.thumb { flex: 0 0 85%; width: 5px; border: 1px solid #bbb; border-left-color: #ccc; background: #dcdce0; }
.scroll svg:last-child { margin-top: auto; }
.split { width: 3px; flex: none; background: #e2e2e4; }

.work { flex: 1; min-width: 0; display: flex; flex-direction: column; }
.context { display: flex; align-items: center; flex: none; height: 13px; padding-left: 1px; background: linear-gradient(#fafafa, #ededed); }
.context .drop { margin: 0 4px 0 2px; }
.context .drop select { border-left: 1px solid #ccc; }
.w1 { width: 39px; }
.w2 { width: 33px; }
.stage { flex: 1; min-height: 0; display: flex; }
.palette { width: 21px; flex: none; background: #f7f7f7; }
.set { display: grid; grid-template-columns: 10px 10px; grid-auto-rows: 11px; border-bottom: 1px solid #d4d4d4; }
.set:last-child { border-bottom: 0; }
.view {
  display: block;
  flex: 1;
  min-width: 0;
  height: 100%;
  background: linear-gradient(#1c2f49, #2f4159 60%, #56657e 71%, #a0b0c8);
}
.datum path { fill: none; stroke: #a8c43a; stroke-width: 1; }
.datum text { fill: #c5cf2c; font-weight: bold; }
.axis text { fill: #eee; }
.gold text { fill: #d6c75a; font-size: 4px; }
.brand {
  display: flex;
  align-items: center;
  justify-content: flex-end;
  gap: 1px;
  flex: none;
  height: 13px;
  padding-right: 1px;
  background: linear-gradient(#fff, #eee);
  color: #3e5566;
  font: italic bold 7px/10px "Open Sans", sans-serif;
}
.brand svg { width: 9px; height: 10px; }

.message { display: flex; flex: 0 0 66px; border-top: 1px solid #aaa; background: #fff; }
.modes { width: 14px; flex: none; display: flex; flex-direction: column; gap: 1px; border-right: 1px solid #bbb; background: #f6f6f6; }
.modes button { height: 13px; }
.modes button svg { width: 10px; height: 10px; }
.modes .cli { border: 1px solid #aaa; background: #e2e2e2; }
.message textarea { flex: 1; min-width: 0; margin: 0; padding: 1px; border: 0; background: #fff; resize: none; font: inherit; }
.gutter { width: 6px; flex: none; background: #ededed; border-left: 1px solid #ddd; }

.taskbar { display: flex; flex: none; height: 3px; border-top: 1px solid #999; background: #aeb4ba; overflow: hidden; }
.taskbar i { width: 10px; margin-left: 12px; border-radius: 5px 5px 0 0; }
.taskbar .a { margin-left: 4px; background: #7ba5c9; }
.b { background: #e3a92f; }
.c { background: #8ab2d6; }
.d { background: #c77; }
.e { background: #d8382b; }
.taskbar .task { flex: 1; margin-left: 1px; border-radius: 0; background: #e2e2e2; border: 1px solid #888; border-bottom: 0; }
```
